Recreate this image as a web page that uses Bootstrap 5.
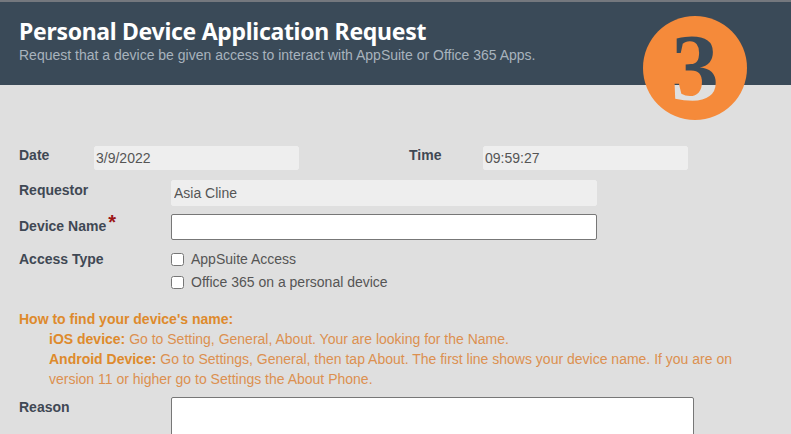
<!doctype html>
<html lang="en">

<head>
    <meta charset="UTF-8">
    <meta name="viewport" content="width=device-width, initial-scale=1.0">
    <title>Personal Device Application Request</title>
    <link href="https://cdn.jsdelivr.net/npm/bootstrap@5.3.0/dist/css/bootstrap.min.css" rel="stylesheet">
    <style>
        html, body { height: 100%; overflow: hidden; }
        body { background: #dfdfdf; font-family: "Liberation Sans", Arial, sans-serif; font-size: 14px; color: #555; }
        .page-head { background: #3a4a58; border-top: 2px solid #74787e; height: 85px; padding: 14px 19px 0; position: relative; }
        .page-title { font-family: "Noto Sans", sans-serif; font-weight: 700; font-size: 23px; line-height: 30px; letter-spacing: -.3px; color: #fff; margin: 0; }
        .page-sub { color: #a8b3bd; font-size: 14px; line-height: 18px; margin: 0; }
        .step-badge { position: absolute; left: 643px; top: 14px; width: 104px; height: 104px; border-radius: 50%; background: #f58a3a; display: flex; align-items: center; justify-content: center; }
        .step-num { font-family: "Liberation Serif", serif; font-weight: 700; font-size: 96px; line-height: 104px; background: linear-gradient(#3a4a58 0, #3a4a58 69px, #dfdfdf 69px); -webkit-background-clip: text; background-clip: text; color: transparent; }
        .form-area { padding: 61px 19px 0; }
        .field-label { font-weight: 700; color: #3f4854; font-size: 14px; line-height: 18px; }
        .field-input { height: 26px; border: 1px solid #777; border-radius: 2px; background: #fff; padding: 0 1px; font-size: 14px; color: #555; }
        .field-input[readonly] { border-color: #eee; background: #eee; }
        .date-row { height: 24px; margin-bottom: 10px; }
        .date-row .field-input { height: 24px; width: 205px; }
        .date-label { width: 75px; }
        .time-label { width: 74px; margin-left: 110px; }
        .form-line { margin-bottom: 8px; }
        .line-label { width: 152px; padding-top: 1px; }
        .name-label { padding-top: 3px; }
        .access-label { padding-top: 2px; }
        .wide-input { width: 426px; padding-left: 2px; }
        .req-star { color: #9c1616; font-size: 20px; line-height: 10px; position: relative; top: -2px; margin-left: 2px; }
        .check-line { height: 23px; }
        .check-box { width: 13px; height: 13px; margin: 0 7px 0 0; accent-color: #fff; }
        .check-text { color: #555; }
        .help-block { color: #dc9050; line-height: 20px; margin-top: 15px; }
        .help-block b { color: #de8a2c; }
        .help-body { padding-left: 30px; }
        .reason-line { margin-top: 8px; }
        .reason-input { width: 523px; height: 90px; resize: none; }
    </style>
</head>

<body>
    <header class="page-head">
        <h1 class="page-title">Personal Device Application Request</h1>
        <p class="page-sub">Request that a device be given access to interact with AppSuite or Office 365 Apps.</p>
        <div class="step-badge"><span class="step-num">3</span></div>
    </header>

    <form class="form-area">
        <div class="d-flex date-row">
            <label class="field-label date-label">Date</label>
            <input type="text" class="field-input" value="3/9/2022" readonly>
            <label class="field-label time-label">Time</label>
            <input type="text" class="field-input" value="09:59:27" readonly>
        </div>
        <div class="d-flex form-line">
            <label class="field-label line-label">Requestor</label>
            <input type="text" class="field-input wide-input" value="Asia Cline" readonly>
        </div>
        <div class="d-flex form-line">
            <label class="field-label line-label name-label">Device Name<span class="req-star">*</span></label>
            <input type="text" class="field-input wide-input">
        </div>
        <div class="d-flex">
            <label class="field-label line-label access-label">Access Type</label>
            <div>
                <div class="d-flex align-items-center check-line"><input type="checkbox" class="check-box"><span class="check-text">AppSuite Access</span></div>
                <div class="d-flex align-items-center check-line"><input type="checkbox" class="check-box"><span class="check-text">Office 365 on a personal device</span></div>
            </div>
        </div>
        <div class="help-block">
            <b>How to find your device's name:</b>
            <div class="help-body">
                <div><b>iOS device:</b> Go to Setting, General, About. Your are looking for the Name.</div>
                <div><b>Android Device:</b> Go to Settings, General, then tap About. The first line shows your device name. If you are on version 11 or higher go to Settings the About Phone.</div>
            </div>
        </div>
        <div class="d-flex reason-line">
            <label class="field-label line-label">Reason</label>
            <textarea class="field-input reason-input"></textarea>
        </div>
    </form>
</body>

</html>
